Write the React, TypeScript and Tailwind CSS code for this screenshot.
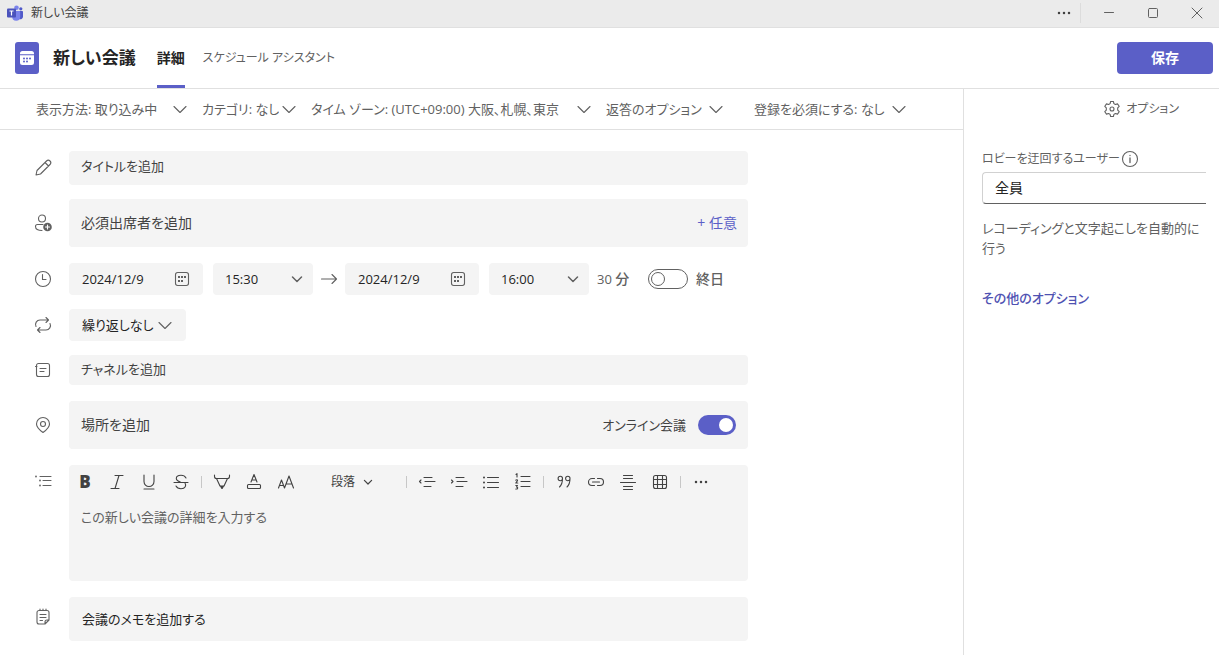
import { useState, type ReactNode } from 'react';

/** ===== Icons (20x20 grid, thin strokes) ===== */
function Icon({ children, className = 'size-5' }: { children: ReactNode; className?: string }) {
  return (
    <svg
      viewBox="0 0 20 20"
      className={`shrink-0 ${className}`}
      fill="none"
      stroke="currentColor"
      strokeWidth="1.1"
      strokeLinecap="round"
      strokeLinejoin="round"
      aria-hidden="true"
    >
      {children}
    </svg>
  );
}

const Chevron = ({ className = 'size-5' }: { className?: string }) => (
  <Icon className={className}>
    <path d="M4 7.5l6 6 6-6" />
  </Icon>
);

const SmallChevron = ({ className = 'size-5' }: { className?: string }) => (
  <Icon className={className}>
    <path d="M5.5 8l4.5 4.5L14.500 8" strokeWidth="1.5" />
  </Icon>
);

const More = () => (
  <Icon>
    <g fill="currentColor" stroke="none">
      <circle cx="5" cy="10" r="1.25" />
      <circle cx="10" cy="10" r="1.25" />
      <circle cx="15" cy="10" r="1.25" />
    </g>
  </Icon>
);

const CalendarIcon = () => (
  <Icon>
    <rect x="3.500" y="3.500" width="13" height="13" rx="2.200" />
    <path d="M6 8h2M9 8h2M12 8h2M6 12h2M9 12h2" strokeWidth="2" strokeLinecap="butt" />
  </Icon>
);

const TeamsLogo = () => (
  <svg viewBox="0 0 16 16" className="size-4 shrink-0" aria-hidden="true">
    <circle cx="13.800" cy="3.800" r="1.600" fill="#5059c9" />
    <circle cx="9.500" cy="2.700" r="2.300" fill="#7b83eb" />
    <path d="M11 6h4.300c.4 0 .7.300.7.700v5a2.700 2.700 0 0 1-4 2.300z" fill="#5059c9" />
    <path d="M5.500 6h7c.4 0 .7.300.7.700v5a4 4 0 0 1-8 0z" fill="#7b83eb" />
    <rect x="0" y="3.500" width="9" height="9" rx="1" fill="#4b53bc" />
    <path d="M2.500 6h4M4.500 6v4.500" stroke="#fff" strokeWidth="1.200" fill="none" />
  </svg>
);

function Row({ icon, children, className = 'mt-4' }: { icon: ReactNode; children: ReactNode; className?: string }) {
  return (
    <div className={`flex items-center gap-4 ${className}`}>
      {icon}
      {children}
    </div>
  );
}

function BarSelect({ text, width }: { text: string; width: string }) {
  return (
    <div className={`relative flex shrink-0 items-center ${width}`}>
      <select aria-label={text} className="h-8 w-full appearance-none bg-transparent pr-4">
        <option>{text}</option>
      </select>
      <Chevron className="pointer-events-none absolute -right-1 size-5" />
    </div>
  );
}

function DateBox({ label }: { label: string }) {
  const [value, setValue] = useState('2024/12/9');
  return (
    <div className="flex h-8 w-[134px] items-center rounded bg-[#f4f4f4] pr-[11px] pl-[13px]">
      <input
        aria-label={label}
        value={value}
        onChange={(e) => setValue(e.target.value)}
        className="w-full min-w-0 bg-transparent text-[#242424] outline-none"
      />
      <CalendarIcon />
    </div>
  );
}

function TimeBox({ label, value }: { label: string; value: string }) {
  return (
    <div className="relative flex h-8 w-[100px] items-center rounded bg-[#f4f4f4]">
      <select aria-label={label} className="h-full w-full appearance-none bg-transparent pl-3 text-[#242424]">
        <option>{value}</option>
      </select>
      <SmallChevron className="pointer-events-none absolute right-[6px] size-5" />
    </div>
  );
}

function Tool({ label, children }: { label: string; children: ReactNode }) {
  return (
    <button type="button" aria-label={label} className="flex h-8 w-8 items-center justify-center">
      {children}
    </button>
  );
}

const Divider = () => <span className="mx-1 h-3 w-px bg-[#c7c7c7]" />;

function TitleBar() {
  return (
    <header className="flex h-7 items-center border-b border-[#e0e0e0] bg-[#ebebeb] pb-[2px] pl-[7px] text-[#424242]">
      <TeamsLogo />
      <span className="ml-2 text-[12px]">新しい会議</span>
      <div className="ml-auto flex items-center">
        <button type="button" aria-label="その他" className="mr-[6px]">
          <More />
        </button>
        <span className="mr-[6px] h-5 w-px bg-[#dcdcdc]" />
        <div className="flex text-[#616161]">
          <button type="button" aria-label="最小化" className="flex w-11 justify-center">
            <Icon><path d="M5.500 9.500h9" strokeWidth="1" /></Icon>
          </button>
          <button type="button" aria-label="最大化" className="flex w-11 justify-center">
            <Icon><rect x="5.500" y="5.500" width="9" height="9" rx="1" strokeWidth="1" /></Icon>
          </button>
          <button type="button" aria-label="閉じる" className="flex w-11 justify-center">
            <Icon><path d="M5 5l10 10M15 5L5 15" strokeWidth="1" /></Icon>
          </button>
        </div>
      </div>
    </header>
  );
}

function PageHeader() {
  return (
    <div className="flex h-[61px] items-center border-b border-[#e0e0e0] pr-[6px] pl-[15px] text-[14px]">
      <div className="flex h-8 w-6 items-center justify-center rounded-[3px] bg-[#5b5fc7]">
        <svg viewBox="0 0 16 16" className="size-4" aria-hidden="true">
          <path d="M1 4.200V3.500A2.500 2.500 0 0 1 3.500 1h9A2.500 2.500 0 0 1 15 3.500v.7z" fill="#fff" />
          <path d="M1 5.200h14v7.300a2.500 2.500 0 0 1-2.500 2.500h-9A2.500 2.500 0 0 1 1 12.500z" fill="#fff" />
          <g fill="#5b5fc7">
            <circle cx="5" cy="8.500" r="1" />
            <circle cx="8" cy="8.500" r="1" />
            <circle cx="11" cy="8.500" r="1" />
            <circle cx="5" cy="11.500" r="1" />
            <circle cx="8" cy="11.500" r="1" />
          </g>
        </svg>
      </div>
      <h1 className="ml-[14px] text-[17px] font-bold text-[#242424]">新しい会議</h1>
      <nav className="ml-[21px] flex h-full gap-[18px]">
        <a href="#details" className="flex h-full flex-col justify-center border-y-3 border-t-transparent border-b-[#5b5fc7] font-bold text-[#242424]">
          詳細
        </a>
        <a href="#assistant" className="flex h-full items-center text-[12px]">
          スケジュール アシスタント
        </a>
      </nav>
      <button type="button" className="ml-auto h-8 w-24 rounded bg-[#5b5fc7] font-bold text-white">
        保存
      </button>
    </div>
  );
}

function Editor() {
  return (
    <div className="h-[116px] flex-1 rounded bg-[#f4f4f4]">
      <div className="flex h-[34px] items-center text-[#424242]">
        <Tool label="太字"><span className="text-[17px] font-extrabold">B</span></Tool>
        <Tool label="斜体"><Icon><path d="M8 3.500h8M4 16.500h8M12 3.500l-4 13" /></Icon></Tool>
        <Tool label="下線"><Icon><path d="M5 3v6.500a5 5 0 0 0 10 0V3M5 17h10" /></Icon></Tool>
        <Tool label="取り消し線">
          <Icon><path d="M15 6C14 4 12.500 3.300 10 3.300c-3 0-4.700 1.400-4.700 3.200 0 2 1.700 2.700 4 3.500M3 10.500h14M14 11c1.500 2.500.5 5.700-4 5.700-2.500 0-4.200-1-5-2.700" /></Icon>
        </Tool>
        <Divider />
        <Tool label="蛍光ペン">
          <Icon>
            <path d="M2.500 3v1.500a2 2 0 0 0 2 2h11a2 2 0 0 0 2-2V3M4.500 6.500L8 14M15.500 6.500L12 14" />
            <path d="M7.500 13.500h5L10.500 17h-1z" fill="currentColor" stroke="none" />
          </Icon>
        </Tool>
        <Tool label="文字の色">
          <Icon>
            <path d="M7 10l3-7.500L13 10M8 8h4" />
            <rect x="3.500" y="12.500" width="13" height="4" rx="1" />
          </Icon>
        </Tool>
        <Tool label="文字サイズ">
          <Icon><path d="M2.500 16l3-8 3 8M3.500 13.500h4M8.500 16l4.500-12 4.500 12M10 12h6" /></Icon>
        </Tool>
        <div className="relative flex w-[100px] items-center">
          <select aria-label="段落スタイル" className="h-8 w-full appearance-none bg-transparent pl-[29px] text-[12px]">
            <option>段落</option>
          </select>
          <SmallChevron className="pointer-events-none absolute right-[26px] size-4" />
        </div>
        <Divider />
        <Tool label="インデントを減らす">
          <Icon><path d="M7 5.500h8M8 9.500h10M7 14.500h7M4 8L2.500 9.500 4 11" /></Icon>
        </Tool>
        <Tool label="インデントを増やす">
          <Icon><path d="M7 5.500h8M8 9.500h10M7 14.500h7M2.500 8L4 9.500 2.500 11" /></Icon>
        </Tool>
        <Tool label="箇条書き">
          <Icon>
            <path d="M6.500 5.500h11M6.500 10.500h11M6.500 15.500h11" />
            <path d="M3 5.500h0M3 10.500h0M3 15.500h0" strokeWidth="2" />
          </Icon>
        </Tool>
        <Tool label="番号付きリスト">
          <Icon>
            <path d="M8 4.500h9M8 9.500h9M8 14.500h9" />
            <path d="M3 2.500l1-.8V5M2.800 8.200c.6-.8 2-.5 1.700.5L2.800 11h2M2.800 13.500h1.700L3.500 15c1.800 0 1.500 2.500-.7 2" />
          </Icon>
        </Tool>
        <Divider />
        <Tool label="引用">
          <Icon>
            <path d="M8.500 6.500a2.200 2.200 0 1 1-4.400 0 2.200 2.200 0 0 1 4.400 0c0 4-.8 6.500-3 8.500M16 6.500a2.200 2.200 0 1 1-4.400 0 2.200 2.200 0 0 1 4.400 0c0 4-.8 6.500-3 8.500" />
          </Icon>
        </Tool>
        <Tool label="リンク">
          <Icon><path d="M8.500 6.500H6a3.500 3.500 0 0 0 0 7h2.500M11.500 6.500H14a3.500 3.500 0 0 1 0 7h-2.500M6.500 10h7" /></Icon>
        </Tool>
        <Tool label="区切り線">
          <Icon><path d="M5.500 3.500h9M5.500 6.500h9M2.500 10.500h15M5.500 14.500h9M5.500 17.500h9" /></Icon>
        </Tool>
        <Tool label="表">
          <Icon>
            <rect x="3.500" y="3.500" width="13" height="13" rx="2" />
            <path d="M7.500 3.500v13M12.500 3.500v13M3.500 7.500h13M3.500 12.500h13" />
          </Icon>
        </Tool>
        <Divider />
        <Tool label="その他の書式"><More /></Tool>
      </div>
      <textarea
        aria-label="会議の詳細"
        placeholder="この新しい会議の詳細を入力する"
        className="block h-[76px] w-full resize-none bg-transparent px-3 pt-2 leading-5 outline-none placeholder:text-[#616161]"
      />
    </div>
  );
}

const fieldClass = 'min-w-0 flex-1 rounded bg-[#f4f4f4] px-3 text-[#242424] outline-none placeholder:text-[#424242]';

function MeetingForm() {
  const [online, setOnline] = useState(true);
  const [allDay, setAllDay] = useState(false);

  return (
    <form className="flex max-w-[748px] flex-col pt-[21px] pb-[14px] pl-[33px]">
      <Row className="" icon={<Icon><path d="M12 4.500l3.500 3.500M3 17l1-4.500 9.500-9.500a2.300 2.300 0 0 1 3.500 3.500L7.500 16z" /></Icon>}>
        <input aria-label="タイトル" placeholder="タイトルを追加" className={`h-[34px] pb-1 ${fieldClass}`} />
      </Row>

      <Row
        className="mt-[14px]"
        icon={
          <Icon>
            <circle cx="9" cy="5.500" r="3.500" />
            <path d="M9 17.500c-4 0-6.500-1.200-6.500-4 0-1.200.8-2 2-2h5.500" />
            <circle cx="14.500" cy="14" r="4.300" fill="currentColor" stroke="none" />
            <path d="M14.500 12v4M12.500 14h4" stroke="#fff" />
          </Icon>
        }
      >
        <div className="flex h-12 flex-1 items-center rounded bg-[#f4f4f4] pr-[11px] text-[14px]">
          <input aria-label="必須出席者" placeholder="必須出席者を追加" className={`h-12 pb-[2px] ${fieldClass}`} />
          <button type="button" className="text-[#5b5fc7]">+ 任意</button>
        </div>
      </Row>

      <Row icon={<Icon><circle cx="10" cy="10" r="7.500" /><path d="M9.500 5.500v5h3.500" /></Icon>}>
        <div className="flex flex-1 items-center">
          <DateBox label="開始日" />
          <span className="w-[10px]" />
          <TimeBox label="開始時刻" value="15:30" />
          <span className="flex w-8 justify-center">
            <Icon><path d="M2.500 10h15M13 5.500l4.500 4.500-4.500 4.500" /></Icon>
          </span>
          <DateBox label="終了日" />
          <span className="w-[10px]" />
          <TimeBox label="終了時刻" value="16:00" />
          <span className="ml-2 w-[51px] whitespace-nowrap">
            30 <span className="text-[14px] font-medium">分</span>
          </span>
          <label className="flex items-center gap-2 text-[14px] font-medium">
            <input
              type="checkbox"
              role="switch"
              checked={allDay}
              onChange={(e) => setAllDay(e.target.checked)}
              className="flex h-5 w-10 appearance-none items-center rounded-full border border-[#616161] px-[2px] before:size-[14px] before:rounded-full before:border before:border-[#616161] before:content-[''] checked:justify-end"
            />
            終日
          </label>
        </div>
      </Row>

      <Row
        className="mt-[14px]"
        icon={<Icon><path d="M13 2.500L15.500 5 13 7.500M15.500 5H7a4.500 4.500 0 0 0-4 6.500M7 17.500L4.500 15 7 12.500M4.500 15H13a4.500 4.500 0 0 0 4-6.500" /></Icon>}
      >
        <div className="relative flex w-[117px] items-center rounded bg-[#f4f4f4]">
          <select aria-label="繰り返し" className="h-8 w-full appearance-none bg-transparent pl-[13px] text-[#242424]">
            <option>繰り返しなし</option>
          </select>
          <Chevron className="pointer-events-none absolute right-[11px] size-5" />
        </div>
      </Row>

      <Row
        className="mt-[14px]"
        icon={<Icon><path d="M2.500 6.500h1.500M5.500 3.500h9a2 2 0 0 1 2 2v9a2 2 0 0 1-2 2h-9a2 2 0 0 1-2-2v-9a2 2 0 0 1 2-2zM7 8.500h6M7 11.500h4" /></Icon>}
      >
        <input aria-label="チャネル" placeholder="チャネルを追加" className={`h-[30px] pb-[2px] ${fieldClass}`} />
      </Row>

      <Row
        icon={<Icon><path d="M10 17.500C6.500 15 3.500 12 3.500 9a6.500 6.500 0 0 1 13 0c0 3-3 6-6.500 8.500z" /><circle cx="10" cy="9" r="2.500" /></Icon>}
      >
        <div className="flex h-12 flex-1 items-center rounded bg-[#f4f4f4] pr-3">
          <input aria-label="場所" placeholder="場所を追加" className={`h-12 pb-[2px] text-[14px] ${fieldClass}`} />
          <label className="flex items-center gap-3 text-[#424242]">
            オンライン会議
            <input
              type="checkbox"
              role="switch"
              checked={online}
              onChange={(e) => setOnline(e.target.checked)}
              className="flex h-5 w-[38px] appearance-none items-center rounded-full bg-[#616161] px-[3px] before:size-[14px] before:rounded-full before:bg-white before:content-[''] checked:justify-end checked:bg-[#5b5fc7]"
            />
          </label>
        </div>
      </Row>

      <div className="mt-4 flex gap-4">
        <Icon className="mt-[6px] size-5">
          <path d="M7 5.500h11M10 9.500h8M10 14.500h8" />
          <path d="M3 5.500h0M7 9.500h0M7 14.500h0" strokeWidth="1.800" />
        </Icon>
        <Editor />
      </div>

      <div className="mt-4 flex gap-4">
        <Icon className="mt-[10px] size-5">
          <path d="M6 3.500h8a2 2 0 0 1 2 2V13l-4 4H6a2 2 0 0 1-2-2V5.500a2 2 0 0 1 2-2zM16 13h-2a2 2 0 0 0-2 2v2M7 2v1.500M10 2v1.500M13 2v1.500M7 7.500h6M7 10.500h6M7 13.500h2.500" />
        </Icon>
        <button type="button" className="h-11 flex-1 rounded bg-[#f4f4f4] px-[13px] text-left text-[#242424]">
          会議のメモを追加する
        </button>
      </div>
    </form>
  );
}

function OptionsPanel() {
  return (
    <aside className="w-64 shrink-0 border-l border-[#e0e0e0]">
      <div className="flex h-10 items-center justify-end pr-10">
        <button type="button" className="flex items-center gap-1 text-[12px]">
          <Icon>
            <path d="M8.600 2.500h2.800l.5 2.100 1.500.9 2.100-.6 1.700 2.400-1.500 1.600v2.200l1.500 1.600-1.700 2.400-2.100-.6-1.500.9-.5 2.100H8.600l-.5-2.100-1.500-.9-2.100.6-1.700-2.400 1.500-1.600V8.900L2.800 7.300l1.700-2.400 2.100.6 1.500-.9z" />
            <circle cx="10" cy="10" r="2" />
          </Icon>
          オプション
        </button>
      </div>
      <div className="flex flex-col pt-5 pr-[13px] pl-[18px]">
        <div className="flex items-center">
          <label htmlFor="lobby" className="text-[12px]">ロビーを迂回するユーザー</label>
          <Icon>
            <circle cx="10" cy="10" r="7.500" />
            <path d="M10 9v4.500M10 6.500h0" strokeWidth="1.300" />
          </Icon>
        </div>
        <select
          id="lobby"
          className="mt-[3px] h-8 appearance-none rounded-l border border-r-0 border-[#d1d1d1] border-b-[#616161] bg-white px-3 text-[14px] text-[#242424]"
        >
          <option>全員</option>
        </select>
        <p className="mt-[14px] leading-5">レコーディングと文字起こしを自動的に行う</p>
        <a href="#more" className="mt-[30px] font-medium text-[#4f52b2]">その他のオプション</a>
      </div>
    </aside>
  );
}

export default function App() {
  return (
    <div
      lang="ja"
      className="flex min-h-screen flex-col bg-white font-['Open_Sans','Noto_Sans_CJK_JP',sans-serif] text-[13px] leading-5 text-[#616161] [font-feature-settings:'palt']"
    >
      <TitleBar />
      <PageHeader />
      <div className="flex flex-1">
        <main className="min-w-0 flex-1">
          <div className="flex h-[41px] items-center gap-4 border-b border-[#e0e0e0] pl-9">
            <BarSelect text="表示方法: 取り込み中" width="w-[150px]" />
            <BarSelect text="カテゴリ: なし" width="w-[93px]" />
            <BarSelect text="タイム ゾーン: (UTC+09:00) 大阪、札幌、東京" width="w-[279px]" />
            <button type="button" className="-mr-1 flex w-[120px] items-center justify-between whitespace-nowrap">
              返答のオプション
              <Chevron />
            </button>
            <BarSelect text="登録を必須にする: なし" width="ml-4 w-[151px]" />
          </div>
          <MeetingForm />
        </main>
        <OptionsPanel />
      </div>
    </div>
  );
}
